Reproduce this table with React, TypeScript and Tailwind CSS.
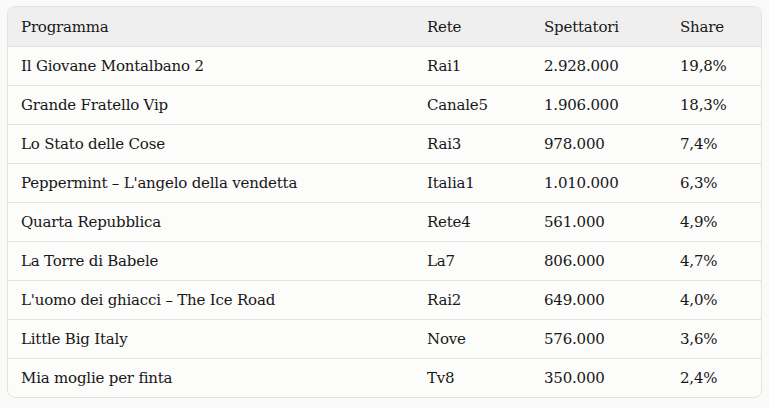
const rows = [
  ["Il Giovane Montalbano 2", "Rai1", "2.928.000", "19,8%"],
  ["Grande Fratello Vip", "Canale5", "1.906.000", "18,3%"],
  ["Lo Stato delle Cose", "Rai3", "978.000", "7,4%"],
  ["Peppermint – L'angelo della vendetta", "Italia1", "1.010.000", "6,3%"],
  ["Quarta Repubblica", "Rete4", "561.000", "4,9%"],
  ["La Torre di Babele", "La7", "806.000", "4,7%"],
  ["L'uomo dei ghiacci – The Ice Road", "Rai2", "649.000", "4,0%"],
  ["Little Big Italy", "Nove", "576.000", "3,6%"],
  ["Mia moglie per finta", "Tv8", "350.000", "2,4%"],
];

export default function App() {
  return (
    <div className="min-h-[408px] w-[769px] bg-[#fafaf9] px-[7px] pt-[6px] font-[family-name:'DejaVu_Serif',serif] text-[15px] tracking-[-0.2px] text-[#171717]">
      <div className="overflow-hidden rounded-lg border border-[#e3e3e3] bg-[#fcfcfb]">
        <div className="grid h-[39px] grid-cols-[406px_117px_136px_1fr] items-center bg-[#efefef] pt-px">
          <div className="pl-[13px]">Programma</div>
          <div className="pl-[13px]">Rete</div>
          <div className="pl-[13px]">Spettatori</div>
          <div className="pl-[13px]">Share</div>
        </div>
        {rows.map((r, i) => (
          <div key={i} className="grid h-[39px] grid-cols-[406px_117px_136px_1fr] items-center border-t border-[#e3e3e3] pt-px">
            {r.map((c, j) => (
              <div key={j} className="pl-[13px]">{c}</div>
            ))}
          </div>
        ))}
      </div>
    </div>
  );
}
